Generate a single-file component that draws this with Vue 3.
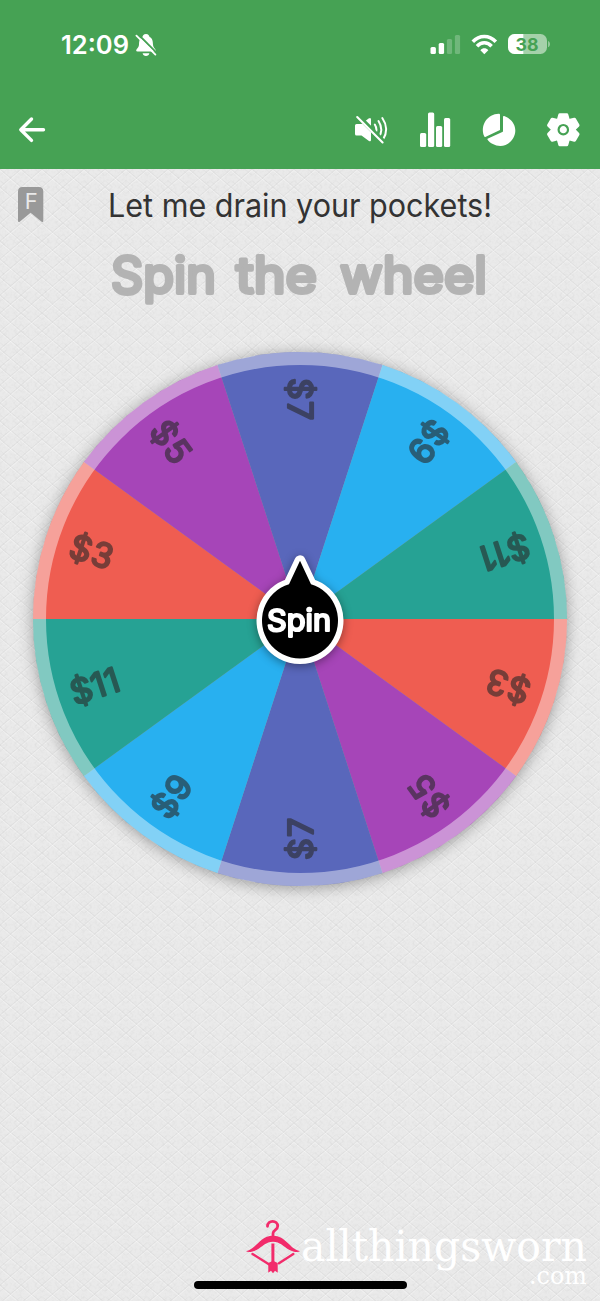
<script setup>
const slices = [
  { label: '$3', angle: 18, color: '#ef5d51' },
  { label: '$5', angle: 54, color: '#a645b8' },
  { label: '$7', angle: 90, color: '#5967bb' },
  { label: '$9', angle: 126, color: '#28b0f0' },
  { label: '$11', angle: 162, color: '#26a294' },
  { label: '$3', angle: 198, color: '#ef5d51' },
  { label: '$5', angle: 234, color: '#a645b8' },
  { label: '$7', angle: 270, color: '#5967bb' },
  { label: '$9', angle: 306, color: '#28b0f0' },
  { label: '$11', angle: 342, color: '#26a294' },
]
const R = 267
const rad = (18 * Math.PI) / 180
const sx = -R * Math.cos(rad)
const sy = R * Math.sin(rad)
const slicePath = `M0 0L${sx} ${sy}A${R} ${R} 0 0 1 ${sx} ${-sy}Z`
const teeth = [0, 60, 120, 180, 240, 300]
</script>

<template>
  <div class="screen">
    <header class="header">
      <div class="status">
        <svg class="clock" width="100" height="30" viewBox="60 30 100 30">
          <text x="61" y="53.7" class="time" textLength="68" lengthAdjust="spacingAndGlyphs">12:09</text>
          <path d="M146 34C143.500 34 142.900 35.800 142.400 37C139.500 38.500 139.200 41 139 44.500C138.800 48 136.200 49 136.200 50.500Q136.200 51.600 137.500 51.600H154.500Q155.800 51.600 155.800 50.500C155.800 49 153.200 48 153 44.500C152.800 41 152.500 38.500 149.600 37C149.100 35.800 148.500 34 146 34ZM142.600 53.200H149.400C149 55 147.800 56 146 56S143 55 142.600 53.200Z" fill="#fff" />
          <path d="M138.300 34.500L157.500 53.700" stroke="#46a254" stroke-width="1.800" />
          <path d="M136.400 35.600L155.400 54.600" stroke="#fff" stroke-width="1.800" stroke-linecap="round" />
        </svg>
        <svg width="124" height="30" viewBox="428 30 124 30">
          <g fill="#fff">
            <rect x="430.500" y="47" width="5.400" height="7" rx="1.500" />
            <rect x="438.700" y="43" width="5.400" height="11" rx="1.500" />
            <rect x="446.900" y="39" width="5.200" height="15" rx="1.500" opacity=".23" />
            <rect x="454.900" y="35" width="5.200" height="19" rx="1.500" opacity=".23" />
          </g>
          <g fill="none" stroke="#fff" stroke-width="3.500">
            <path d="M472.800 41.700C479.300 34.700 489.300 34.700 495.800 41.700" />
            <path d="M477 46.200C481.200 41.700 487.400 41.700 491.600 46.200" />
          </g>
          <path d="M480.400 50.200C482.700 47.700 486 47.700 488.300 50.200L484.300 54.200Z" fill="#fff" />
          <rect x="508" y="34" width="39" height="20" rx="6.500" fill="#a5d1aa" />
          <path d="M523.300 34H514.500A6.500 6.500 0 0 0 508 40.500V47.500A6.500 6.500 0 0 0 514.500 54H523.300Z" fill="#fff" />
          <path d="M548.200 41C550.400 42.200 550.400 46 548.200 47.200Z" fill="#a5d1aa" />
          <text x="515.500" y="50.800" class="battery" textLength="23" lengthAdjust="spacingAndGlyphs">38</text>
        </svg>
      </div>
      <nav class="toolbar">
        <svg width="30" height="36" viewBox="17 112 30 36" fill="none" stroke="#fff" stroke-width="3.400" stroke-linecap="round" stroke-linejoin="round">
          <path d="M43.500 129.700H21M31.500 119L20.800 129.700L31.500 140.400" />
        </svg>
        <div class="actions">
          <svg width="37" height="36" viewBox="353 112 37 36">
            <path d="M355 125.500Q355 124 356.500 124H361.500L368.600 118.600Q371 117 371 119.500V139.800Q371 142.300 368.600 140.700L361.500 135.600H356.500Q355 135.600 355 134Z" fill="#fff" />
            <g fill="none" stroke="#fff" stroke-width="2" stroke-linecap="round">
              <path d="M374.800 124.500Q378 129.700 374.800 134.500" />
              <path d="M378.500 121Q384 129.500 378.500 138.200" />
              <path d="M382.300 118Q389.800 129 382.800 140" />
            </g>
            <path d="M358.500 116.500L384.800 142.800" stroke="#46a254" stroke-width="4.600" />
            <path d="M357.200 117L382.600 142.500" stroke="#fff" stroke-width="2.100" stroke-linecap="round" />
          </svg>
          <svg width="35" height="36" viewBox="418 112 35 36" fill="#fff">
            <rect x="420" y="133" width="6.200" height="14" rx="1.500" />
            <rect x="428" y="112.500" width="6.200" height="34.500" rx="1.500" />
            <rect x="436" y="126" width="6.200" height="21" rx="1.500" />
            <rect x="444" y="118" width="6.200" height="29" rx="1.500" />
          </svg>
          <svg width="36" height="36" viewBox="481 112 36 36" fill="#fff">
            <path d="M500 114.800V130L485.300 136.900Q484.500 137.200 484.200 136.200C479.700 125 488 113.500 499 113.700Q500 113.800 500 114.800Z" />
            <path d="M503 117Q503 115.800 504.200 116.100C512 118.800 515.500 125 515.300 131C515 139 508.500 145.900 500.300 145.900C495 145.900 490 143.200 487.600 139.800Q487.100 139 488 138.600L502.300 132Q503 131.700 503 130.900Z" />
          </svg>
          <svg width="36" height="36" viewBox="545 112 36 36">
            <g transform="translate(563.300 129.700)">
              <circle r="12.200" fill="#fff" />
              <path v-for="t in teeth" :key="t" :transform="`rotate(${t})`" d="M-6.500 -10L-5 -15.300Q-4.700 -16.500 -3.500 -16.500H3.500Q4.700 -16.500 5 -15.300L6.500 -10Z" fill="#fff" />
              <circle r="4.700" fill="none" stroke="#46a254" stroke-width="2.200" />
            </g>
          </svg>
        </div>
      </nav>
    </header>

    <main class="stage">
      <svg class="paper" width="600" height="1132">
        <defs>
          <pattern id="lattice" width="21" height="18" patternUnits="userSpaceOnUse">
            <path d="M0 0L21 18M21 0L0 18" stroke="#000" stroke-opacity=".04" fill="none" />
            <path d="M0 1.500L21 19.500M21 1.500L0 19.500" stroke="#fff" stroke-opacity=".3" fill="none" />
            <path d="M7.500 0L0 6.500M13.500 0L21 6.500M0 11.500L7.500 18M21 11.500L13.500 18" stroke="#000" stroke-opacity=".02" fill="none" />
          </pattern>
          <filter id="grain" x="0" y="0" width="100%" height="100%">
            <feTurbulence type="fractalNoise" baseFrequency=".4" numOctaves="2" seed="4" />
            <feColorMatrix values="0 0 0 0 0  0 0 0 0 0  0 0 0 0 0  .25 0 0 0 -.1" />
          </filter>
        </defs>
        <rect width="600" height="1132" fill="url(#lattice)" />
        <rect width="600" height="1132" filter="url(#grain)" opacity=".2" />
      </svg>

      <div class="heading">
        <svg width="26" height="36" viewBox="18 187 26 36">
          <path d="M18 191.500Q18 187 22.500 187H39Q43.300 187 43.300 191.500V220.500Q43.300 223 41.300 221.500L30.600 212.800L20 221.500Q18 223 18 220.500Z" fill="#999" />
          <text x="24.700" y="209.200" class="flag">F</text>
        </svg>
        <svg class="title" width="400" height="46" viewBox="100 184 400 46">
          <text x="108" y="217.400" textLength="384" lengthAdjust="spacingAndGlyphs">Let me drain your pockets!</text>
        </svg>
      </div>

      <svg class="subtitle" width="400" height="83" viewBox="100 231 400 83">
        <text x="111" y="293" textLength="105" lengthAdjust="spacingAndGlyphs">Spin</text>
        <text x="236" y="293" textLength="81" lengthAdjust="spacingAndGlyphs">the</text>
        <text x="340" y="293" textLength="147" lengthAdjust="spacingAndGlyphs">wheel</text>
      </svg>

      <svg class="wheel" width="600" height="580" viewBox="0 329 600 580">
        <circle cx="300" cy="619" r="266" class="disc" />
        <g transform="translate(300 619)">
          <path v-for="s in slices" :key="s.angle" :d="slicePath" :fill="s.color" :transform="`rotate(${s.angle})`" />
          <circle r="260.500" fill="none" stroke="#fff" stroke-opacity=".42" stroke-width="13" />
          <g v-for="s in slices" :key="'l' + s.angle" :transform="`rotate(${s.angle})`" class="prize">
            <text :x="s.label === '$11' ? '-241 -219 -205' : '-241 -218'" y="12.500">{{ s.label }}</text>
          </g>
        </g>
        <g class="hub">
          <path d="M289 584.200L300 560.800L311 584.200A38 38 0 1 1 289 584.200Z" />
          <text x="267" y="630.500" textLength="64" lengthAdjust="spacingAndGlyphs">Spin</text>
        </g>
      </svg>

      <footer class="footer">
        <svg class="brand" width="344" height="76" viewBox="246 1216 344 76">
          <g fill="none" stroke="#f22b6b" stroke-linecap="round">
            <path d="M267.500 1226.300C267.500 1219.800 277.700 1219.600 277.700 1226.200C277.700 1230 273 1229.600 273 1233.500V1237" stroke-width="2.800" />
            <path d="M272.900 1243.500V1266" stroke-width="3" stroke-linecap="butt" />
            <path d="M252.500 1254L270 1265M293.300 1254L279 1263.300" stroke-width="2.400" />
          </g>
          <path d="M246 1251.300C257 1248.500 260 1235.800 273 1235.800C286 1235.800 289 1248.500 300 1251.300C298 1252.700 293 1252 289.500 1250C283.500 1246.500 280 1241.700 273 1241.700S262.500 1246.500 256.500 1250C253 1252 248 1252.700 246 1251.300ZM268.300 1263L273 1260.800L277.700 1263V1272.700L275 1270.800L273 1273.300L271 1270.800L268.300 1272.700Z" fill="#f22b6b" />
          <text x="301" y="1260.500" class="name" textLength="286" lengthAdjust="spacingAndGlyphs">allthingsworn</text>
          <text x="529" y="1283.500" class="domain" textLength="58" lengthAdjust="spacingAndGlyphs">.com</text>
        </svg>
        <div class="home"></div>
      </footer>
    </main>
  </div>
</template>

<style>
body { background: #e9e9e9; }
</style>

<style scoped>
.screen {
  width: 600px;
  height: 1301px;
  display: flex;
  flex-direction: column;
  overflow: hidden;
  background: #eaeaea;
  font-family: Inter, "Liberation Sans", sans-serif;
}
svg { display: block; overflow: visible; }
.header {
  height: 169px;
  box-sizing: border-box;
  background: #46a254;
  padding-top: 30px;
}
.status {
  display: flex;
  justify-content: space-between;
  padding: 0 48px 0 60px;
}
.time { font-size: 25px; font-weight: 600; fill: #fff; }
.battery { font-size: 18px; font-weight: 700; fill: #46a254; }
.toolbar {
  display: flex;
  justify-content: space-between;
  padding: 52px 19px 0 17px;
}
.actions { display: flex; gap: 28px; }
.stage {
  position: relative;
  flex: 1;
  display: flex;
  flex-direction: column;
}
.paper { position: absolute; left: 0; top: 0; }
.heading, .subtitle, .wheel, .footer { position: relative; }
.heading {
  display: flex;
  height: 62px;
  gap: 56px;
  padding: 15px 0 0 18px;
  box-sizing: border-box;
}
.heading svg:first-child { margin-top: 3px; }
.title text { font-size: 32px; fill: #333; }
.flag { font-size: 22px; font-weight: 400; fill: #e9e9e9; }
.subtitle { margin-left: 100px; }
.subtitle text {
  font-size: 50px;
  font-weight: 400;
  fill: #b3b3b3;
  stroke: #b3b3b3;
  stroke-width: 4px;
  stroke-linejoin: round;
}
.wheel { margin-top: 15px; }
.disc { fill: #999; filter: drop-shadow(0 2px 8px rgba(0, 0, 0, .38)); }
.prize { opacity: .6; }
.prize text {
  font-size: 34px;
  font-weight: 400;
  fill: #292929;
  stroke: #292929;
  stroke-width: 2.2px;
  stroke-linejoin: round;
}
.hub { filter: drop-shadow(0 2px 5px rgba(0, 0, 0, .4)); }
.hub path {
  fill: #000;
  stroke: #fff;
  stroke-width: 11px;
  stroke-linejoin: round;
  paint-order: stroke;
}
.hub text {
  font-size: 30px;
  font-weight: 400;
  fill: #fff;
  stroke: #fff;
  stroke-width: 2.2px;
  stroke-linejoin: round;
}
.footer {
  margin-top: auto;
  height: 85px;
}
.brand { margin-left: 246px; }
.name, .domain { font-family: "DejaVu Serif", serif; fill: #fff; }
.name { font-size: 42px; }
.domain { font-size: 24px; }
.home {
  position: absolute;
  left: 194px;
  bottom: 12px;
  width: 213px;
  height: 8px;
  border-radius: 4px;
  background: #000;
}
</style>
